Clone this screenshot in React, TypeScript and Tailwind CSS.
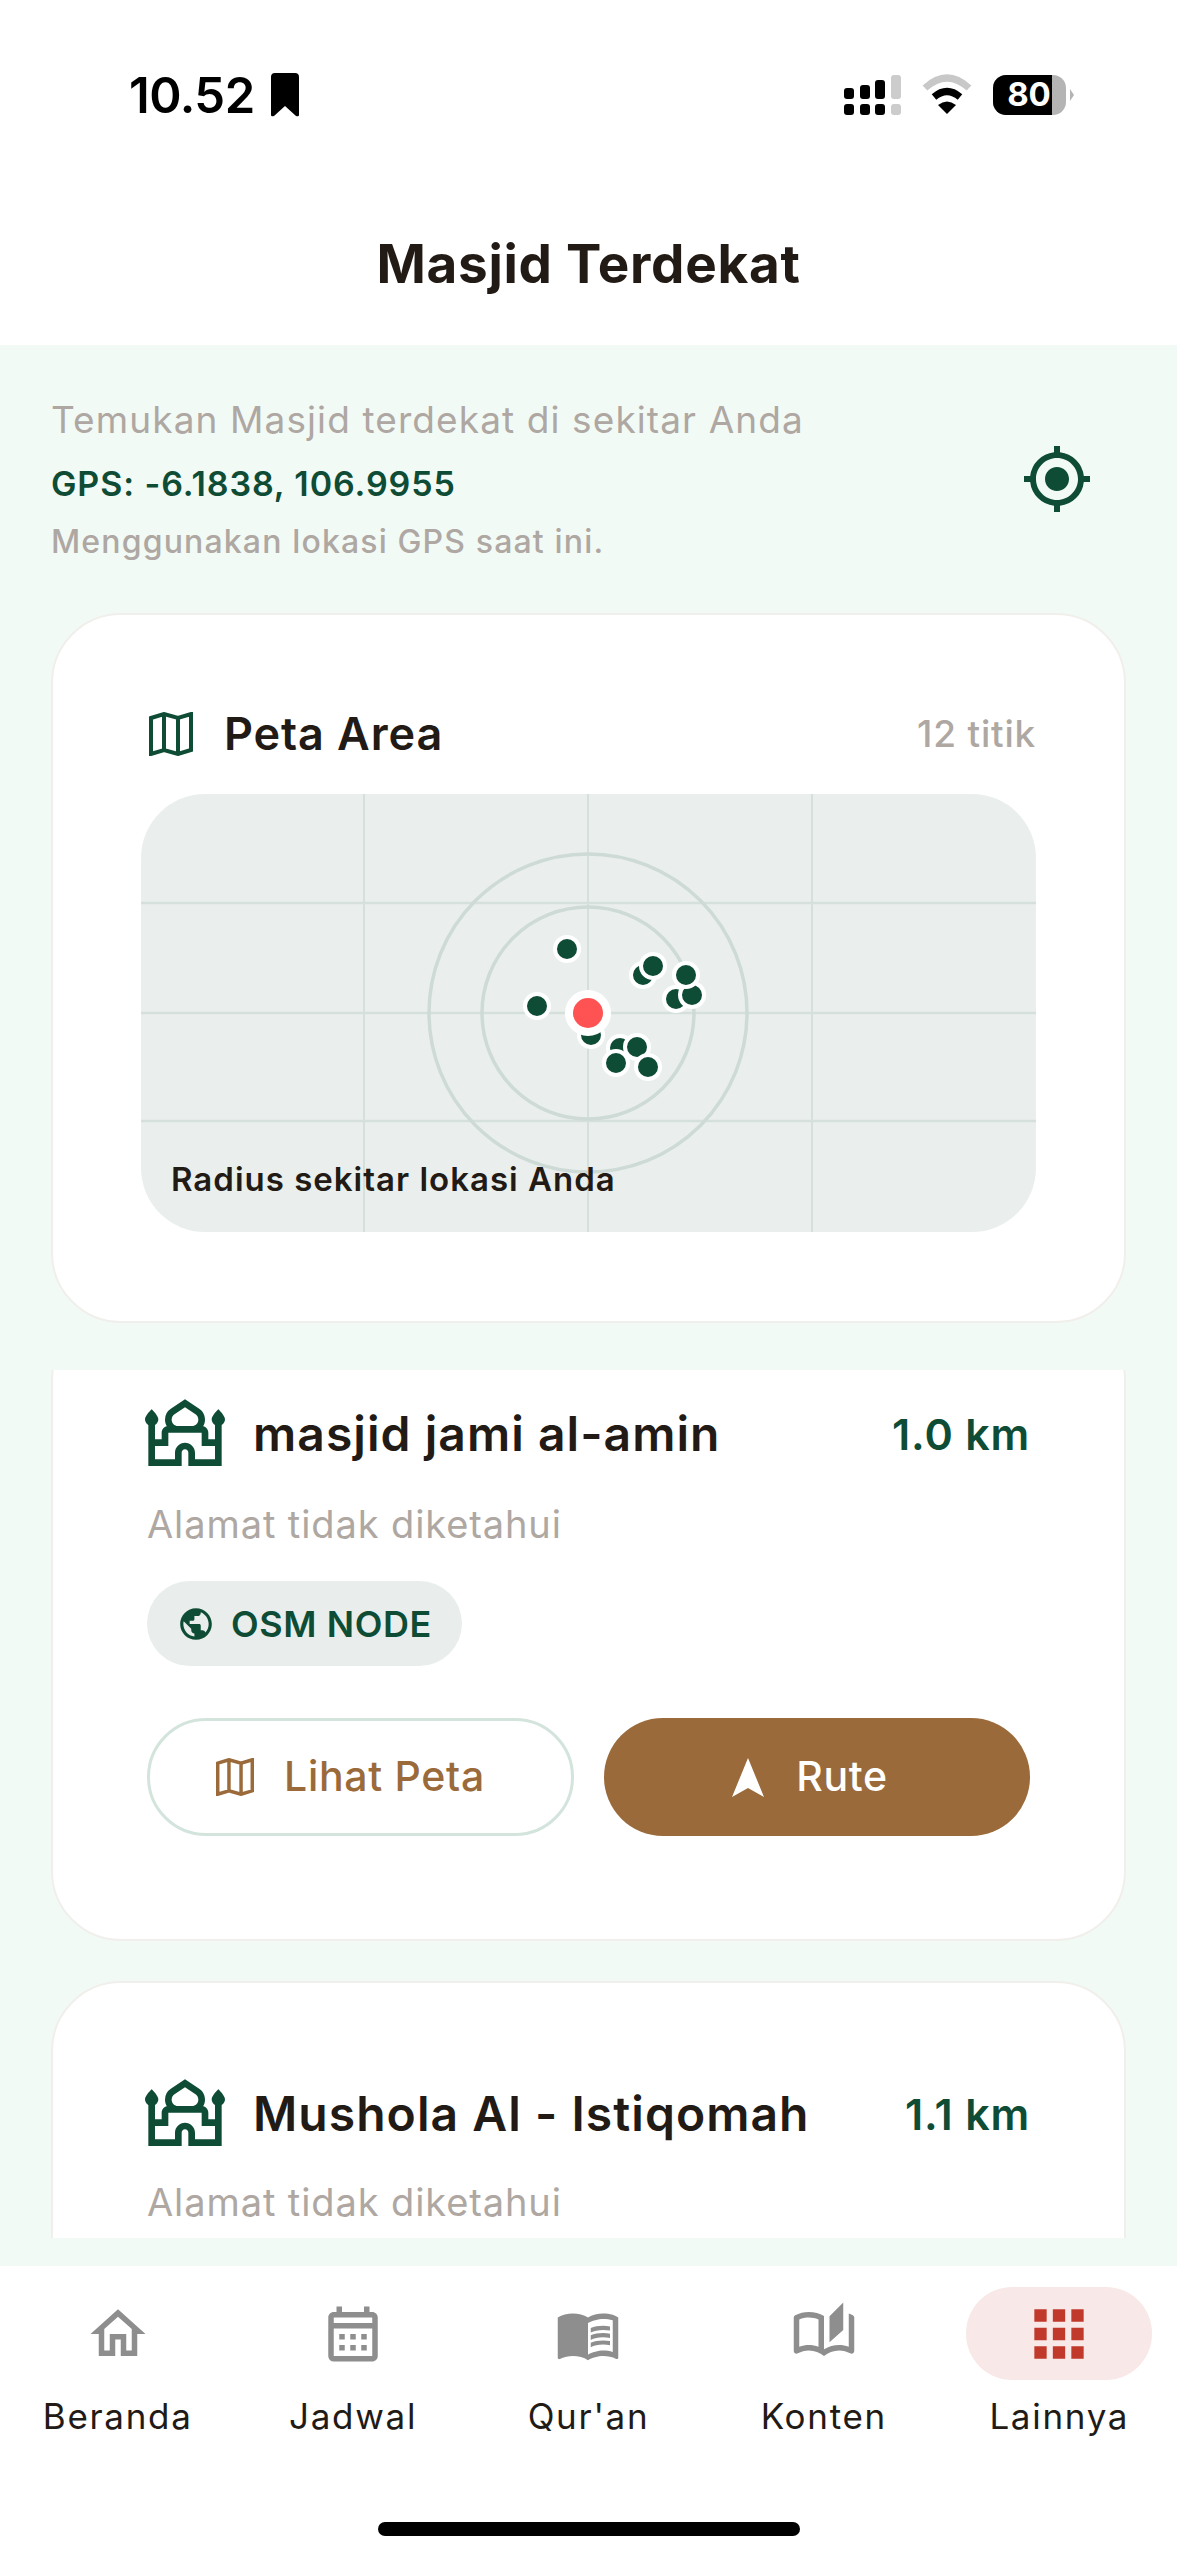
import { MdApps, MdMenuBook, MdMyLocation, MdOutlineAutoStories, MdOutlineCalendarMonth, MdOutlineHome, MdOutlineMosque, MdPublic } from 'react-icons/md';

const DOTS = [
  [426, 155], [396, 212], [502, 181], [512, 172], [535, 205], [551, 201], [545, 181],
  [450, 241], [479, 254], [496, 253], [475, 269], [507, 273],
];

function FoldedMap({ className }: { className: string }) {
  return (
    <svg viewBox="0 0 44 44" fill="none" stroke="currentColor" strokeWidth="4" className={className}>
      <path d="M2 6 L15 2 L29 6 L42 2 V38 L29 42 L15 38 L2 42 Z M15 2 V38 M29 6 V42" />
    </svg>
  );
}

function StatusIcons() {
  return (
    <svg width="240" height="50" viewBox="840 70 240 50" className="block">
      <g fill="#000">
        <rect x="844" y="104" width="10" height="11" rx="3" />
        <rect x="860" y="104" width="10" height="11" rx="3" />
        <rect x="875" y="104" width="10" height="11" rx="3" />
        <rect x="844" y="88" width="10" height="11" rx="3" />
        <rect x="860" y="85" width="10" height="14" rx="3" />
        <rect x="875" y="80" width="10" height="19" rx="3" />
      </g>
      <rect x="891" y="104" width="10" height="11" rx="3" fill="#ccc" />
      <rect x="891" y="75" width="10" height="24" rx="3" fill="#ccc" />
      <path d="M925 88 Q947 68 969 88" fill="none" stroke="#c8c8c8" strokeWidth="7" />
      <path d="M934 97 Q947 86 960 97" fill="none" stroke="#000" strokeWidth="7" />
      <path d="M938 105 Q947 98 956 105 L947 114 Z" fill="#000" />
      <rect x="993" y="75" width="73" height="40" rx="13" fill="#b4b4b4" />
      <path d="M1006 75 H1052 V115 H1006 A13 13 0 0 1 993 102 V88 A13 13 0 0 1 1006 75 Z" fill="#000" />
      <path d="M1070 89 L1074 95 L1070 101 Z" fill="#b4b4b4" />
      <text x="1029" y="106" textAnchor="middle" fill="#fff" fontSize="33" fontWeight="700" fontFamily="Inter, sans-serif">80</text>
    </svg>
  );
}

function MapPreview() {
  return (
    <div className="relative h-[438px] overflow-hidden rounded-[64px] bg-[#eaefed]">
      <svg width="895" height="438" viewBox="0 0 895 438" className="absolute inset-0">
        <g stroke="#d5dfdb" strokeWidth="2">
          <line x1="223" y1="0" x2="223" y2="438" />
          <line x1="447" y1="0" x2="447" y2="438" />
          <line x1="671" y1="0" x2="671" y2="438" />
          <line x1="0" y1="109" x2="895" y2="109" strokeWidth="2.5" />
          <line x1="0" y1="219" x2="895" y2="219" strokeWidth="2.5" />
          <line x1="0" y1="327" x2="895" y2="327" strokeWidth="2.5" />
        </g>
        <circle cx="447" cy="219" r="159" fill="none" stroke="#cddad5" strokeWidth="3.5" />
        <circle cx="447" cy="219" r="106" fill="none" stroke="#cddad5" strokeWidth="3.5" />
        {DOTS.map(([x, y]) => (
          <circle key={`${x}-${y}`} cx={x} cy={y} r="12" fill="#0f4c35" stroke="#fff" strokeWidth="4" />
        ))}
        <circle cx="447" cy="219" r="19" fill="#ff5252" stroke="#fff" strokeWidth="8" />
      </svg>
      <span className="absolute bottom-[33px] left-[30px] text-[33px] font-semibold leading-[40px] tracking-[1px] text-[#221a15]">
        Radius sekitar lokasi Anda
      </span>
    </div>
  );
}

function MosqueRow({ name, dist }: { name: string; dist: string }) {
  return (
    <div className="flex h-[74px] items-center justify-between">
      <div className="flex items-center">
        <MdOutlineMosque className="-ml-[2px] mt-[3px] text-[80px] text-[#0f4c35]" />
        <span className="ml-[28px] text-[48px] font-semibold tracking-[1.05px] text-[#221a15]">{name}</span>
      </div>
      <span className="text-[43px] font-semibold tracking-[0.8px] text-[#0f4c35]">{dist}</span>
    </div>
  );
}

const NAV = [
  { label: 'Beranda', Icon: MdOutlineHome },
  { label: 'Jadwal', Icon: MdOutlineCalendarMonth },
  { label: "Qur'an", Icon: MdMenuBook },
  { label: 'Konten', Icon: MdOutlineAutoStories },
];

export default function App() {
  return (
    <div className="flex h-[2560px] w-[1177px] flex-col overflow-hidden bg-white font-['Inter',sans-serif]">
      {/* Status bar + title */}
      <header className="h-[345px] flex-shrink-0">
        <div className="mt-[70px] flex h-[50px] items-center justify-between pl-[129px] pr-[97px]">
          <div className="flex items-center gap-[15px]">
            <span className="text-[49px] font-semibold leading-none tracking-[-0.5px] text-black">10.52</span>
            <svg width="30" height="44" viewBox="0 0 30 44">
              <path d="M5 0 H25 A4 4 0 0 1 29 4 V42 Q29 44 26 43 L15 33 L4 43 Q1 44 1 42 V4 A4 4 0 0 1 5 0 Z" fill="#000" />
            </svg>
          </div>
          <StatusIcons />
        </div>
        <h1 className="mt-[115px] text-center text-[53px] font-bold leading-[58px] tracking-[0.7px] text-[#221a15]">Masjid Terdekat</h1>
      </header>

      <main className="flex-1 bg-[#f2faf6]">
        <section className="flex items-center justify-between pl-[51px] pr-[84px] pt-[50px]">
          <div>
            <p className="text-[37px] leading-[50px] tracking-[1.1px] text-[#aea7a2]">Temukan Masjid terdekat di sekitar Anda</p>
            <p className="mt-[19px] text-[34px] font-semibold leading-[40px] tracking-[0.9px] text-[#0f4c35]">GPS: -6.1838, 106.9955</p>
            <p className="mt-[18px] text-[32px] font-medium leading-[40px] tracking-[1.15px] text-[#aea7a2]">Menggunakan lokasi GPS saat ini.</p>
          </div>
          <MdMyLocation className="text-[72px] text-[#0f4c35]" />
        </section>

        <section className="mx-[51px] mt-[51px] h-[710px] rounded-[70px] border-2 border-[#f0efeb] bg-white px-[88px] pt-[92px]">
          <div className="flex h-[54px] items-center justify-between">
            <div className="ml-[8px] flex items-center gap-[31px]">
              <FoldedMap className="h-[44px] w-[44px] text-[#0f4c35]" />
              <span className="text-[45px] font-semibold tracking-[0.9px] text-[#221a15]">Peta Area</span>
            </div>
            <span className="text-[37px] font-medium tracking-[0.8px] text-[#aea7a2]">12 titik</span>
          </div>
          <div className="mt-[33px]">
            <MapPreview />
          </div>
        </section>

        {/* Clipped scroll list */}
        <div className="mt-[47px] h-[868px] overflow-hidden">
          <article className="mx-[51px] -mt-[60px] h-[631px] rounded-[70px] border-2 border-[#f0efeb] bg-white pl-[94px] pr-[94px] pt-[85px]">
            <MosqueRow name="masjid jami al-amin" dist="1.0 km" />
            <p className="mt-[28px] text-[38px] leading-[50px] tracking-[0.9px] text-[#aea7a2]">Alamat tidak diketahui</p>
            <div className="mt-[32px] flex h-[85px] w-[315px] items-center rounded-full bg-[#e9eeec] pl-[30px]">
              <MdPublic className="text-[38px] text-[#0f4c35]" />
              <span className="ml-[16px] text-[36px] font-semibold tracking-[0.6px] text-[#0f4c35]">OSM NODE</span>
            </div>
            <div className="mt-[52px] flex gap-[30px]">
              <button className="flex h-[118px] w-[428px] items-center justify-center gap-[30px] rounded-full border-[3px] border-[#d3e4dc] bg-white pr-[20px] text-[41px] font-medium tracking-[0.7px] text-[#9a6a3a]">
                <FoldedMap className="h-[38px] w-[38px]" />
                Lihat Peta
              </button>
              <button className="flex h-[118px] w-[427px] items-center justify-center gap-[32px] rounded-full bg-[#9a6a3a] pr-[14px] text-[41px] font-medium tracking-[0.7px] text-white">
                <svg width="32" height="39" viewBox="0 0 32 39">
                  <path d="M16 0 L32 39 L16 30 L0 39 Z" fill="#fff" />
                </svg>
                Rute
              </button>
            </div>
          </article>
          <article className="mx-[51px] mt-[40px] h-[400px] rounded-[70px] border-2 border-[#f0efeb] bg-white pl-[94px] pr-[94px] pt-[94px]">
            <MosqueRow name="Mushola Al - Istiqomah" dist="1.1 km" />
            <p className="mt-[26px] text-[38px] leading-[50px] tracking-[0.9px] text-[#aea7a2]">Alamat tidak diketahui</p>
          </article>
        </div>
      </main>

      {/* Bottom nav */}
      <nav className="relative h-[294px] flex-shrink-0 bg-white">
        <div className="grid grid-cols-5 pt-[21px]">
          {NAV.map(({ label, Icon }) => (
            <div key={label} className="flex flex-col items-center">
              <div className="flex h-[93px] items-center justify-center">
                <Icon className="text-[66px] text-[#8e8e8e]" />
              </div>
              <span className="mt-[14px] text-[35px] leading-[44px] tracking-[1.7px] text-[#221a15]">{label}</span>
            </div>
          ))}
          <div className="flex flex-col items-center">
            <div className="flex h-[93px] w-[186px] items-center justify-center rounded-[46px] bg-[#f8e9e8]">
              <MdApps className="text-[74px] text-[#c0392b]" />
            </div>
            <span className="mt-[14px] text-[35px] leading-[44px] tracking-[1.7px] text-[#221a15]">Lainnya</span>
          </div>
        </div>
        <div className="absolute bottom-[24px] left-[378px] h-[14px] w-[422px] rounded-full bg-black" />
      </nav>
    </div>
  );
}
